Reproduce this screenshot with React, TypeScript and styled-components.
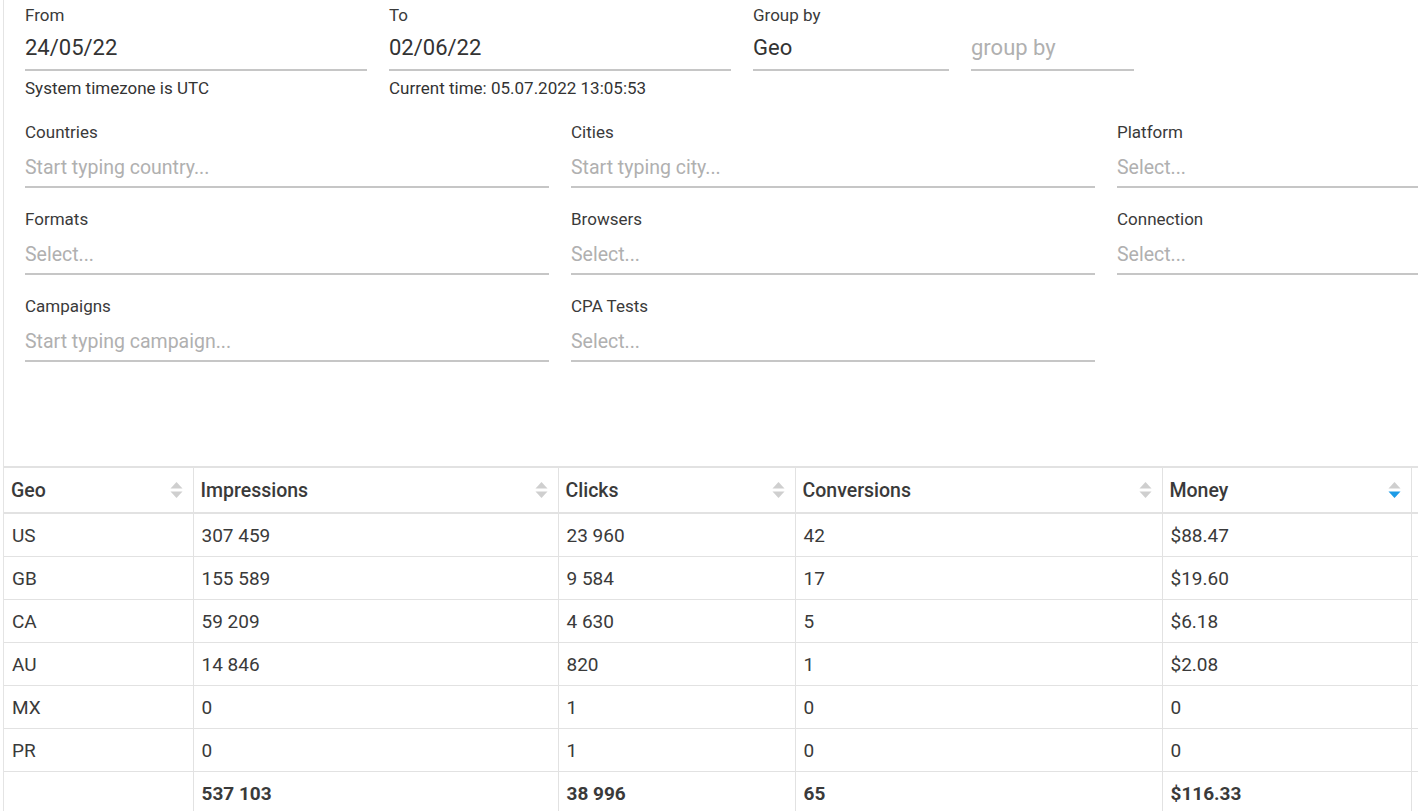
import React from "react"
import styled, { createGlobalStyle } from "styled-components"

const GlobalStyle = createGlobalStyle`
  html, body {
    margin: 0;
    padding: 0;
    background: #fff;
    overflow: hidden;
  }
  body {
    font-family: Roboto, "Liberation Sans", Arial, sans-serif;
    color: #333;
  }
`

const Page = styled.div`
  margin-left: 3px;
  border-left: 1px solid #e4e4e4;
  min-height: 811px;
  width: 1700px;
`

const Form = styled.div`
  padding: 7px 0 0 21px;
`

const TopRow = styled.div`
  display: flex;
  gap: 22px;
  align-items: flex-start;
`

const Field = styled.div<{ width: number }>`
  width: ${(p) => p.width}px;
  display: flex;
  flex-direction: column;
`

const Label = styled.label`
  display: block;
  font-size: 17px;
  line-height: 16px;
  color: #3a3a3a;
  height: 18px;
  white-space: nowrap;
`

const BigInput = styled.div<{ placeholder?: boolean }>`
  height: 44px;
  display: flex;
  align-items: center;
  font-size: 22px;
  color: ${(p) => (p.placeholder ? "#b0b0b0" : "#333")};
  border-bottom: 2px solid #c6c6c6;
`

const Helper = styled.div`
  margin-top: 8px;
  font-size: 17px;
  line-height: 18px;
  color: #333;
  white-space: nowrap;
`

const FilterGrid = styled.div`
  margin-top: 27px;
  display: grid;
  grid-template-columns: repeat(3, 524px);
  column-gap: 22px;
  row-gap: 23px;
`

const FilterInput = styled.div`
  height: 38px;
  padding-top: 6px;
  display: flex;
  align-items: center;
  font-size: 19.5px;
  color: #b0b0b0;
  border-bottom: 2px solid #c6c6c6;
`

const Table = styled.table`
  margin-top: 104px;
  border-collapse: collapse;
  table-layout: fixed;
  width: 1660px;
  border-top: 2px solid #e2e2e2;
  font-size: 19px;
`

const HeadCell = styled.th`
  height: 44px;
  padding: 0 10px 0 7px;
  text-align: left;
  font-weight: 500;
  font-size: 19.5px;
  color: #3a3a3a;
  border-right: 1px solid #e2e2e2;
  border-bottom: 2px solid #e2e2e2;
`

const HeadInner = styled.div`
  display: flex;
  align-items: center;
  justify-content: space-between;
`

const Cell = styled.td<{ bold?: boolean }>`
  height: 42px;
  padding: 0 8px;
  color: #3a3a3a;
  font-weight: ${(p) => (p.bold ? 700 : 400)};
  border-right: 1px solid #e2e2e2;
  border-bottom: 1px solid #e2e2e2;
  white-space: nowrap;
`

const SortIcon = ({ active }: { active?: boolean }) => (
  <svg width="13" height="18" viewBox="0 0 13 18">
    <path d="M6.5 1 L12.5 7.5 L0.5 7.5 Z" fill="#cfcfcf" />
    <path
      d="M0.5 10.5 L12.5 10.5 L6.5 17 Z"
      fill={active ? "#1d9be6" : "#cfcfcf"}
    />
  </svg>
)

const columns = [
  { title: "Geo", width: 189 },
  { title: "Impressions", width: 365 },
  { title: "Clicks", width: 237 },
  { title: "Conversions", width: 367 },
  { title: "Money", width: 249, active: true },
  { title: "", width: 253 },
]

const rows = [
  ["US", "307 459", "23 960", "42", "$88.47"],
  ["GB", "155 589", "9 584", "17", "$19.60"],
  ["CA", "59 209", "4 630", "5", "$6.18"],
  ["AU", "14 846", "820", "1", "$2.08"],
  ["MX", "0", "1", "0", "0"],
  ["PR", "0", "1", "0", "0"],
]

const totals = ["", "537 103", "38 996", "65", "$116.33"]

const filters = [
  { label: "Countries", placeholder: "Start typing country..." },
  { label: "Cities", placeholder: "Start typing city..." },
  { label: "Platform", placeholder: "Select..." },
  { label: "Formats", placeholder: "Select..." },
  { label: "Browsers", placeholder: "Select..." },
  { label: "Connection", placeholder: "Select..." },
  { label: "Campaigns", placeholder: "Start typing campaign..." },
  { label: "CPA Tests", placeholder: "Select..." },
]

export default function App() {
  return (
    <>
      <GlobalStyle />
      <Page>
        <Form>
          <TopRow>
            <Field width={342}>
              <Label>From</Label>
              <BigInput>24/05/22</BigInput>
              <Helper>System timezone is UTC</Helper>
            </Field>
            <Field width={342}>
              <Label>To</Label>
              <BigInput>02/06/22</BigInput>
              <Helper>Current time: 05.07.2022 13:05:53</Helper>
            </Field>
            <Field width={196}>
              <Label>Group by</Label>
              <BigInput>Geo</BigInput>
            </Field>
            <Field width={163}>
              <Label />
              <BigInput placeholder>group by</BigInput>
            </Field>
          </TopRow>
          <FilterGrid>
            {filters.map((f) => (
              <Field key={f.label} width={524}>
                <Label>{f.label}</Label>
                <FilterInput>{f.placeholder}</FilterInput>
              </Field>
            ))}
          </FilterGrid>
        </Form>
        <Table>
          <colgroup>
            {columns.map((c, i) => (
              <col key={i} style={{ width: c.width }} />
            ))}
          </colgroup>
          <thead>
            <tr>
              {columns.map((c, i) => (
                <HeadCell key={i}>
                  {c.title && (
                    <HeadInner>
                      <span>{c.title}</span>
                      <SortIcon active={c.active} />
                    </HeadInner>
                  )}
                </HeadCell>
              ))}
            </tr>
          </thead>
          <tbody>
            {rows.map((r) => (
              <tr key={r[0]}>
                {r.map((v, i) => (
                  <Cell key={i}>{v}</Cell>
                ))}
                <Cell />
              </tr>
            ))}
            <tr>
              {totals.map((v, i) => (
                <Cell key={i} bold>
                  {v}
                </Cell>
              ))}
              <Cell />
            </tr>
          </tbody>
        </Table>
      </Page>
    </>
  )
}
